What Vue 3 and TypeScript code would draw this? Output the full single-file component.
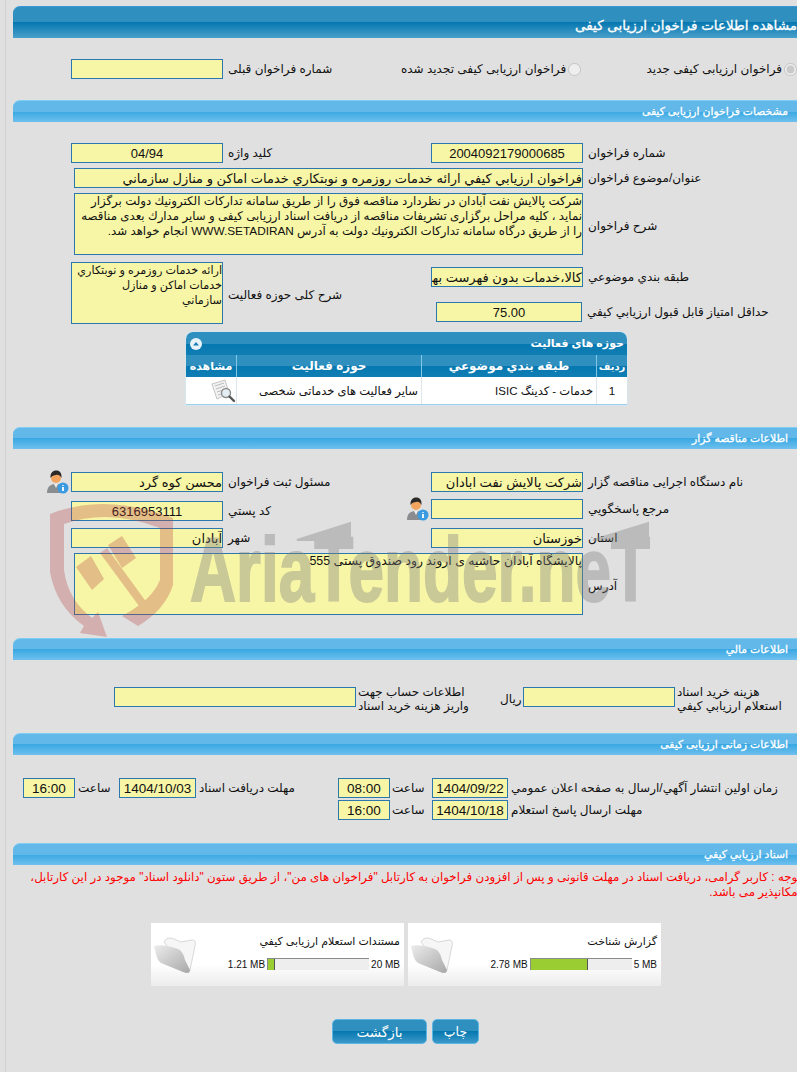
<script setup lang="ts">
interface Doc { title: string; used: string; max: string; pct: number }
const docs: Doc[] = [
  { title: 'مستندات استعلام ارزيابی كيفي', used: '1.21 MB', max: '20 MB', pct: 7 },
  { title: 'گزارش شناخت', used: '2.78 MB', max: '5 MB', pct: 57 },
]
const description = 'شركت پالايش نفت آبادان در نظردارد مناقصه فوق را از طريق سامانه تداركات الكترونيك دولت برگزار نمايد ، كليه مراحل برگزاری تشريفات مناقصه از دريافت اسناد ارزيابی كيفی و ساير مدارك بعدی مناقصه را از طريق درگاه سامانه تداركات الكترونيك دولت به آدرس WWW.SETADIRAN انجام خواهد شد.'
const scope = 'ارائه خدمات روزمره و نوبتكاري\nخدمات اماكن و منازل\nسازماني'
const address = 'پالايشگاه آبادان حاشيه ی اروند رود صندوق پستی 555'
</script>

<template>
  <div class="page">
    <div class="main">
      <div class="bar dark"><span>مشاهده اطلاعات فراخوان ارزيابی كيفی</span></div>
      <div class="body radios">
        <div class="row">
          <div class="r-first pair">
            <input class="fld w152" readonly value="" />
            <span class="lbl">شماره فراخوان قبلی</span>
          </div>
          <label class="r-second pair">
            <span class="lbl">فراخوان ارزيابی كيفی تجديد شده</span>
            <input class="radio" type="radio" disabled />
          </label>
          <label class="r-third pair">
            <span class="lbl">فراخوان ارزيابی كيفی جديد</span>
            <input class="radio" type="radio" disabled checked />
          </label>
        </div>
      </div>

      <div class="bar light"><span>مشخصات فراخوان ارزيابی كيفی</span></div>
      <div class="body b2">
        <div class="row">
          <div class="col pair"><input class="fld w152 ctr" readonly value="04/94" /><span class="lbl">كليد واژه</span></div>
          <div class="pair"><input class="fld w152 ctr" readonly value="2004092179000685" /><span class="lbl">شماره فراخوان</span></div>
        </div>
        <div class="row wide gap5">
          <div class="pair"><input class="fld w509" readonly value="فراخوان ارزيابي كيفي ارائه خدمات روزمره و نوبتكاري خدمات اماكن و منازل سازماني" /><span class="lbl">عنوان/موضوع فراخوان</span></div>
        </div>
        <div class="row wide gap5">
          <div class="pair"><textarea class="fld area w509 h62" readonly :value="description"></textarea><span class="lbl low">شرح فراخوان</span></div>
        </div>
        <div class="row gap7">
          <div class="col pair"><textarea class="fld area small w152 h62" readonly :value="scope"></textarea><span class="lbl low">شرح كلی حوزه فعاليت</span></div>
          <div class="stack">
            <div class="pair"><input class="fld w152" readonly value="كالا،خدمات بدون فهرست بها" /><span class="lbl">طبقه بندي موضوعي</span></div>
            <div class="pair min"><input class="fld w146 ctr" readonly value="75.00" /><span class="lbl">حداقل امتياز قابل قبول ارزيابي كيفي</span></div>
          </div>
        </div>
        <div class="grid">
          <div class="grid-title">
            <svg class="collapse" viewBox="0 0 12 12" width="12" height="12"><circle cx="6" cy="6" r="6" fill="#e8f3f9" /><path d="M3 7.5 L6 4 L9 7.5 Z" fill="#1a7fb4" /></svg>
            <span>حوزه های فعاليت</span>
          </div>
          <div class="grid-head">
            <div class="c-view">مشاهده</div><div class="c-act">حوزه فعاليت</div><div class="c-cat">طبقه بندي موضوعي</div><div class="c-no">رديف</div>
          </div>
          <div class="grid-row">
            <div class="c-view">
              <svg viewBox="0 0 26 24" width="26" height="24">
                <path d="M2 5 L15 1 L19 14 L7 20 Z" fill="#f2f2f2" stroke="#b5b5b5" stroke-width=".8" />
                <path d="M5 7 L14 4 M6 10 L15 7 M7 13 L13 11 M8 16 L11 15" stroke="#bbb" stroke-width="1" />
                <circle cx="16" cy="14" r="4.5" fill="#e4eef2" stroke="#8c8c8c" stroke-width="1.4" />
                <path d="M19.5 17.5 L24 22" stroke="#555" stroke-width="2.4" stroke-linecap="round" />
              </svg>
            </div>
            <div class="c-act">ساير فعاليت های خدماتی شخصی</div>
            <div class="c-cat">خدمات - كدينگ ISIC</div>
            <div class="c-no">1</div>
          </div>
        </div>
      </div>

      <div class="bar light"><span>اطلاعات مناقصه گزار</span></div>
      <div class="body b3">
        <div class="row">
          <div class="col pair">
            <svg class="user" viewBox="0 0 24 24" width="24" height="24">
              <path d="M2 23 C2 16 6 14 11 14 C16 14 20 16 20 23 Z" fill="#8a8d90" />
              <path d="M9 14 L11 18 L13 14 Z" fill="#eee" />
              <circle cx="11" cy="8" r="5" fill="#f3a55f" />
              <path d="M5.5 8 C5 2 9 0.5 11 0.5 C14 0.5 17 2 16.500 8 C15 5 13 4.500 11 5 C9 5.500 7 5.500 5.500 8 Z" fill="#2c2a28" />
              <circle cx="18" cy="18" r="5.500" fill="#3a9be0" />
              <path d="M18 15 V15.800 M18 17 V21" stroke="#fff" stroke-width="1.800" />
            </svg>
            <input class="fld w152" readonly value="محسن كوه گرد" /><span class="lbl">مسئول ثبت فراخوان</span>
          </div>
          <div class="pair"><input class="fld w152" readonly value="شركت پالايش نفت ابادان" /><span class="lbl">نام دستگاه اجرايی مناقصه گزار</span></div>
        </div>
        <div class="row gap7">
          <div class="col pair down2"><input class="fld w152 ctr" readonly value="6316953111" /><span class="lbl">كد پستي</span></div>
          <div class="pair top">
            <svg class="user" viewBox="0 0 24 24" width="24" height="24">
              <path d="M2 23 C2 16 6 14 11 14 C16 14 20 16 20 23 Z" fill="#8a8d90" />
              <path d="M9 14 L11 18 L13 14 Z" fill="#eee" />
              <circle cx="11" cy="8" r="5" fill="#f3a55f" />
              <path d="M5.5 8 C5 2 9 0.5 11 0.5 C14 0.5 17 2 16.500 8 C15 5 13 4.500 11 5 C9 5.500 7 5.500 5.500 8 Z" fill="#2c2a28" />
              <circle cx="18" cy="18" r="5.500" fill="#3a9be0" />
              <path d="M18 15 V15.800 M18 17 V21" stroke="#fff" stroke-width="1.800" />
            </svg>
            <input class="fld w152" readonly value="" /><span class="lbl">مرجع پاسخگويي</span>
          </div>
        </div>
        <div class="row gap7">
          <div class="col pair"><input class="fld w152" readonly value="آبادان" /><span class="lbl">شهر</span></div>
          <div class="pair"><input class="fld w152" readonly value="خوزستان" /><span class="lbl">استان</span></div>
        </div>
        <div class="row wide gap5">
          <div class="pair"><textarea class="fld area big w509 h62" readonly :value="address"></textarea><span class="lbl low">آدرس</span></div>
        </div>
      </div>

      <div class="bar light"><span>اطلاعات مالي</span></div>
      <div class="body b4">
        <div class="money">
          <input class="fld w242" readonly value="" />
          <span class="lbl two acc">اطلاعات حساب جهت<br />واريز هزينه خريد اسناد</span>
          <span class="lbl rial">ريال</span>
          <input class="fld w152" readonly value="" />
          <span class="lbl two">هزينه خريد اسناد<br />استعلام ارزيابي كيفي</span>
        </div>
      </div>

      <div class="bar light"><span>اطلاعات زمانی ارزيابی كيفی</span></div>
      <div class="body b5">
        <div class="time">
          <div class="time-left">
            <input class="fld w52 ctr" readonly value="16:00" />
            <span class="lbl hour">ساعت</span>
            <input class="fld w77 ctr" readonly value="1404/10/03" />
            <span class="lbl">مهلت دريافت اسناد</span>
          </div>
          <input class="fld w52 ctr" readonly value="08:00" />
          <span class="lbl hour2">ساعت</span>
          <input class="fld w76 ctr" readonly value="1404/09/22" />
          <span class="lbl">زمان اولين انتشار آگهي/ارسال به صفحه اعلان عمومي</span>
        </div>
        <div class="time second">
          <input class="fld w52 ctr" readonly value="16:00" />
          <span class="lbl hour2">ساعت</span>
          <input class="fld w76 ctr" readonly value="1404/10/18" />
          <span class="lbl">مهلت ارسال پاسخ استعلام</span>
        </div>
      </div>

      <div class="bar light"><span>اسناد ارزيابي كيفي</span></div>
      <p class="notice">توجه : كاربر گرامی، دريافت اسناد در مهلت قانونی و پس از افزودن فراخوان به كارتابل "فراخوان های من"، از طريق ستون "دانلود اسناد" موجود در اين كارتابل، امكانپذير می باشد.</p>

      <div class="cards">
        <div v-for="d in docs" :key="d.title" class="card">
          <svg class="folder" viewBox="0 0 43 37" width="43" height="37">
            <defs>
              <linearGradient id="fl" x1="0" y1="0" x2="1" y2="1"><stop offset="0" stop-color="#ececec" /><stop offset="1" stop-color="#a8a8a8" /></linearGradient>
            </defs>
            <path d="M11 5 C13 1 17 0 21 2 L28 5 L39 3 C42 3 43 5 42 9 L37 33 C36 36 34 36 33 34 Z" fill="#f6f6f6" stroke="#c8c8c8" stroke-width=".7" />
            <path d="M1 9 C7 7 17 9 25 12 C29 14 31 18 32 23 L37 33 C37 36 34 37 30 35 L8 26 C5 24 4 21 3 17 Z" fill="url(#fl)" />
          </svg>
          <div class="card-body">
            <div class="card-title">{{ d.title }}</div>
            <div class="meter">
              <span>{{ d.used }}</span>
              <div class="track"><div class="fill" :style="{ width: d.pct + '%' }"></div></div>
              <span>{{ d.max }}</span>
            </div>
          </div>
        </div>
      </div>

      <div class="actions">
        <button class="btn back" type="button">بازگشت</button>
        <button class="btn print" type="button">چاپ</button>
      </div>
    </div>

    <svg class="mark" viewBox="0 0 797 660" width="797" height="660" aria-hidden="true">
      <g class="mark-red">
        <path d="M50 514 Q105 492 173 518 L173 585 Q165 610 138 626 L122 616 Q152 600 160 580 L160 528 Q108 508 64 524 L64 570 Q68 600 92 618 L98 612 L107 637 L80 633 L84 626 Q56 606 50 572 Z" />
        <path d="M76 567 L91 556 L104 579 L92 590 Z" />
        <path d="M108 545 L122 536 L136 558 L122 568 Z" />
        <path d="M100 553 L107 548 L147 603 L139 606 Z" />
      </g>
      <g class="mark-grey">
        <text x="190" y="601" textLength="460" lengthAdjust="spacingAndGlyphs">AriaTender.neT</text>
        <path d="M297 540 L350 523 L350 540 Z" />
        <path d="M593 540 L648 523 L648 540 Z" />
      </g>
    </svg>
  </div>
</template>

<style>
html, body { margin: 0; background: #e0e0e0; overflow: hidden; }
</style>

<style scoped>
.page {
  position: relative;
  width: 797px;
  height: 1072px;
  overflow: hidden;
  background: #e0e0e0;
  font-family: "Liberation Sans", "DejaVu Sans", sans-serif;
  font-size: 12px;
  color: #111;
}
.main {
  margin-left: 5px;
  border-left: 1px solid #d0d0d0;
  padding: 6px 0 0 7px;
  height: 1066px;
}
.bar {
  display: flex;
  justify-content: flex-start;
  align-items: center;
  box-sizing: border-box;
  color: #fff;
  direction: rtl;
  border-radius: 7px 0 0 0;
  white-space: nowrap;
  overflow: hidden;
  -webkit-text-stroke: .3px #fff;
}
.dark {
  height: 32px;
  font-size: 13.5px;
  padding-top: 4px;
  border-top: 1px solid #3c97d6;
  background: linear-gradient(#2f90bf 0, #2f90bf 50%, #0678b0 50%, #4a9fcb 100%);
}
.light {
  height: 22px;
  font-size: 10.8px;
  padding-right: 9px;
  border-top: 1px solid #7fcdf3;
  background: linear-gradient(#62b8e9 0, #62b8e9 50%, #3aa8e2 50%, #6ec0ee 100%);
}
.radios { padding: 21px 0; }
.row { display: flex; padding-left: 58px; }
.wide { padding-left: 61px; }
.col { width: 360px; }
.gap5 { margin-top: 5px; }
.gap7 { margin-top: 7px; }
.pair { display: flex; align-items: center; gap: 5px; white-space: nowrap; }
.lbl { direction: rtl; font-size: 12px; }
.low { margin-top: 4px; }
.r-first { width: 332px; }
.r-second { width: 247px; gap: 2px; }
.r-third { gap: 2px; }
.radio { margin: 0; width: 13px; height: 13px; }
.fld {
  box-sizing: border-box;
  height: 20px;
  margin: 0;
  padding: 0;
  border: 1px solid #2a78ad;
  border-radius: 0;
  background: #f7f6a6;
  font-family: "Liberation Sans", "DejaVu Sans", sans-serif;
  font-size: 13px;
  color: #111;
  direction: rtl;
  text-align: right;
  outline: none;
}
.ctr { text-align: center; direction: ltr; }
.area { resize: none; overflow: hidden; line-height: 15px; font-size: 11.8px; display: block; }
.small { font-size: 11.2px; }
.big { font-size: 12.4px; }
.w152 { width: 152px; }
.w146 { width: 146px; }
.w509 { width: 509px; }
.w242 { width: 242px; }
.w52 { width: 52px; }
.w76 { width: 76px; }
.w77 { width: 77px; }
.h62 { height: 62px; }
.b2 { padding: 21px 0 22px; }
.b3 { padding: 23px 0; }
.b4 { padding: 27px 0 20px; }
.b5 { padding: 23px 0; }
.stack { padding-top: 5px; }
.min { margin: 15px 0 0 5px; }
.down2 { margin-top: 2px; }
.top { align-self: flex-start; }
.user { margin: -2px -3px -2px -26px; flex: none; }
.grid {
  width: 441px;
  margin: 8px 0 0 173px;
  border-radius: 7px 7px 0 0;
  overflow: hidden;
  background: #fff;
  border-bottom: 1px solid #9fd0ea;
  box-shadow: 0 0 0 1px #d6e6ee;
}
.grid-title {
  display: flex;
  justify-content: space-between;
  align-items: center;
  height: 23px;
  padding: 0 3px 0 4px;
  color: #fff;
  font-weight: bold;
  font-size: 11px;
  direction: ltr;
  background: linear-gradient(#2f90bf 0, #2f90bf 50%, #0678b0 50%, #0f7eb4 100%);
}
.grid-title span { direction: rtl; }
.grid-head, .grid-row { display: flex; direction: ltr; }
.grid-head {
  height: 22px;
  color: #fff;
  font-weight: bold;
  font-size: 12px;
  background: linear-gradient(#2f90bf 0, #2f90bf 50%, #0678b0 50%, #0f7eb4 100%);
}
.grid-head > div, .grid-row > div {
  box-sizing: border-box;
  direction: rtl;
  display: flex;
  align-items: center;
  justify-content: center;
  border-right: 1px solid #7fc6e8;
  white-space: nowrap;
}
.grid-row > div { border-right-color: #dde6ea; }
.grid-head > div:last-child, .grid-row > div:last-child { border-right: 0; }
.grid-head .c-no { font-size: 10px; }
.grid-head .c-view { font-size: 11px; }
.grid-row { height: 27px; font-size: 11.5px; }
.c-view { width: 51px; }
.c-act { width: 185px; }
.c-cat { width: 175px; }
.c-no { width: 30px; }
.grid-row .c-view { justify-content: flex-start; }
.grid-row .c-act, .grid-row .c-cat { justify-content: flex-start; padding-right: 3px; }
.money { display: flex; align-items: flex-start; padding-left: 101px; white-space: nowrap; }
.two { line-height: 14px; text-align: left; margin: -2px 0 0 2px; }
.acc { width: 142px; }
.rial { width: 23px; margin-top: 5px; text-align: left; }
.time { display: flex; align-items: center; padding-left: 10px; white-space: nowrap; }
.time .lbl { margin-left: 3px; }
.second { padding-left: 325px; margin-top: 2px; }
.time-left { display: flex; align-items: center; width: 315px; }
.time .hour { width: 41px; text-align: left; }
.time .hour2 { width: 40px; margin-left: 2px; text-align: left; }
.time .fld { font-size: 13.5px; }
.notice {
  margin: 5px -4px 0 14px;
  direction: rtl;
  color: #f00;
  font-size: 11.85px;
  line-height: 15px;
}
.cards { display: flex; margin: 23px 0 0 138px; gap: 4px; }
.card {
  display: flex;
  justify-content: space-between;
  box-sizing: border-box;
  width: 253px;
  height: 63px;
  padding: 14px 4px 0 2px;
  background: linear-gradient(#fff 0, #fff 65%, #ececec 100%);
}
.card-body { display: flex; flex-direction: column; align-items: flex-end; }
.card-title { direction: rtl; font-size: 11px; margin-top: -4px; height: 25px; line-height: 16px; }
.meter { display: flex; align-items: center; gap: 2px; font-size: 10px; }
.track { width: 102px; height: 12px; background: #eee; border-top: 1px solid #8a8a8a; border-left: 1px solid #8a8a8a; box-sizing: border-box; }
.fill { height: 100%; background: #9acd32; border-right: 1px solid #555; box-sizing: border-box; }
.actions { display: flex; gap: 5px; margin: 33px 0 0 319px; }
.btn {
  box-sizing: border-box;
  height: 25px;
  padding: 0;
  border: 1px solid #5ab6e2;
  border-radius: 5px;
  color: #fff;
  font-family: "Liberation Sans", "DejaVu Sans", sans-serif;
  font-size: 13.5px;
  direction: rtl;
  background: linear-gradient(#2f90bf 0, #2f90bf 50%, #0678b0 50%, #3c98c8 100%);
}
.print { font-size: 12.5px; width: 47px; }
.back { width: 95px; }
.mark { position: absolute; left: 0; top: 0; pointer-events: none; }
.mark-red { fill: #b84040; opacity: .3; }
.mark-grey { fill: #808080; stroke: #808080; stroke-width: 2px; opacity: .38; font-family: "Liberation Sans", sans-serif; font-weight: bold; font-size: 90px; }
</style>
